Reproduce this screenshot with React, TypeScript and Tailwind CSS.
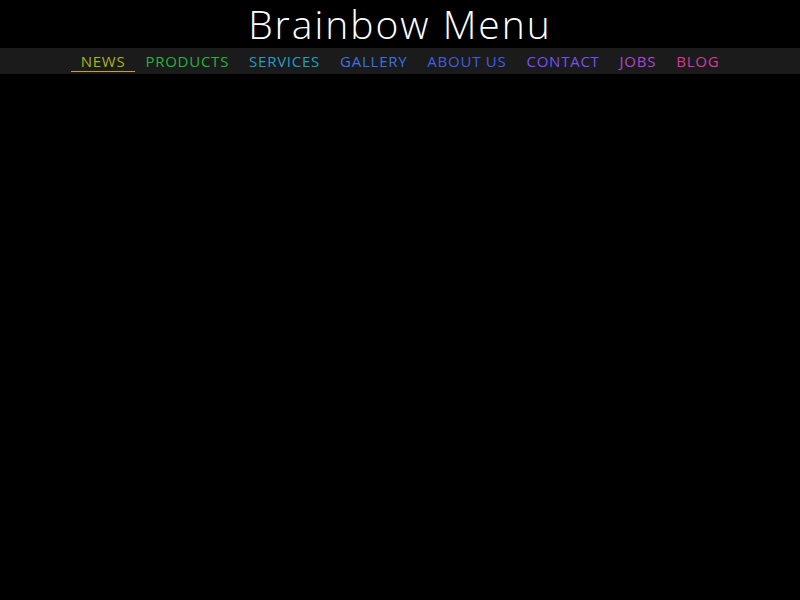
import React from "react";

const items = [
  { label: "NEWS", color: "text-[#a3b51c]", active: true },
  { label: "PRODUCTS", color: "text-[#25b33c]" },
  { label: "SERVICES", color: "text-[#1f9fc4]" },
  { label: "GALLERY", color: "text-[#3a72e2]" },
  { label: "ABOUT US", color: "text-[#3d5ee6]" },
  { label: "CONTACT", color: "text-[#7a4ff0]" },
  { label: "JOBS", color: "text-[#b046d2]" },
  { label: "BLOG", color: "text-[#d8399c]" },
];

export default function App() {
  return (
    <div className="min-h-[600px] w-full bg-black" style={{ fontFamily: '"Open Sans", "Noto Sans", sans-serif' }}>
      <h1 className="h-[48px] text-center text-[39px] font-light leading-[48px] tracking-[2px] text-white">
        Brainbow Menu
      </h1>
      <nav className="flex h-[26px] justify-center bg-[#1b1b1b]">
        <ul className="flex">
          {items.map((it) => (
            <li
              key={it.label}
              className={`relative px-[10px] text-[15px] leading-[26px] tracking-[0.75px] ${it.color}`}
            >
              {it.label}
              {it.active && (
                <span className="absolute bottom-[2px] left-0 right-0 h-px bg-[#c9a21f]" />
              )}
            </li>
          ))}
        </ul>
      </nav>
    </div>
  );
}
